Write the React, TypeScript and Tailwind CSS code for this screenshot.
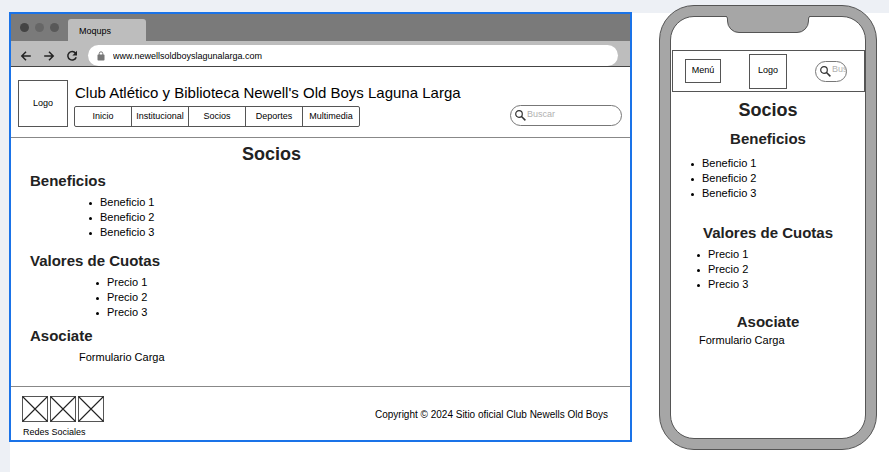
import type { ReactNode } from "react";

const sections = ["Inicio", "Institucional", "Socios", "Deportes", "Multimedia"];
const benefits = ["Beneficio 1", "Beneficio 2", "Beneficio 3"];
const prices = ["Precio 1", "Precio 2", "Precio 3"];

function BackIcon() {
  return (
    <svg className="size-3" viewBox="0 0 12 12" fill="none" stroke="#222" strokeWidth="1.5">
      <path d="M10.8 6H2M6 1.8 1.8 6 6 10.2" />
    </svg>
  );
}

function ForwardIcon() {
  return (
    <svg className="size-3" viewBox="0 0 12 12" fill="none" stroke="#222" strokeWidth="1.5">
      <path d="M1.2 6H10M6 1.8 10.2 6 6 10.2" />
    </svg>
  );
}

function ReloadIcon() {
  return (
    <svg className="size-3" viewBox="0 0 12 12" fill="none">
      <path d="M9.6 3.2A4.3 4.3 0 1 0 10.2 7.2" stroke="#222" strokeWidth="1.5" />
      <path d="M11 0.8V5.4H6.4Z" fill="#222" />
    </svg>
  );
}

function LockIcon() {
  return (
    <svg className="h-[10px] w-[8px] shrink-0" viewBox="0 0 8 10" fill="none">
      <rect x="0.5" y="3.6" width="7" height="6" rx="0.8" fill="#777" />
      <path d="M2.2 4V2.6a1.8 1.8 0 0 1 3.6 0V4" stroke="#777" strokeWidth="1" />
    </svg>
  );
}

function SearchIcon() {
  return (
    <svg className="size-[11px] shrink-0" viewBox="0 0 11 11" fill="none" stroke="#333">
      <circle cx="4" cy="4" r="3.3" strokeWidth="1.2" />
      <path d="M6.5 6.5 10.4 10.4" strokeWidth="1.5" />
    </svg>
  );
}

function SearchBox({ label, className }: { label: string; className: string }) {
  return (
    <label
      className={`flex h-[21px] items-center gap-px overflow-hidden rounded-full border border-[#777] bg-white pl-1 ${className}`}
    >
      <SearchIcon />
      <input
        type="text"
        aria-label={label}
        placeholder="Buscar"
        className="mb-1 h-4 w-20 shrink-0 bg-transparent text-[9px] outline-none placeholder:text-[#b0b0b0]"
      />
    </label>
  );
}

function Title({ children, className }: { children: ReactNode; className: string }) {
  return <h1 className={`text-[18px] leading-6 font-bold text-[#222] ${className}`}>{children}</h1>;
}

function Heading({ children, className }: { children: ReactNode; className: string }) {
  return <h2 className={`text-[15px] leading-5 font-bold text-[#222] ${className}`}>{children}</h2>;
}

function Bullets({ items, className }: { items: string[]; className: string }) {
  return (
    <ul className={`text-[11px] leading-[15px] ${className}`}>
      {items.map((item) => (
        <li
          key={item}
          className="flex items-center gap-2 before:mt-0.5 before:size-[3px] before:rounded-full before:bg-black before:content-['']"
        >
          {item}
        </li>
      ))}
    </ul>
  );
}

function CrossBox({ name }: { name: string }) {
  return (
    <a href="#" aria-label={name}>
      <svg className="size-[26px]" viewBox="0 0 26 26" fill="none" stroke="#222">
        <rect x="0.5" y="0.5" width="25" height="25" stroke="#555" />
        <path d="M0.5 0.5l25 25M25.5 0.5l-25 25" strokeWidth="1.1" />
      </svg>
    </a>
  );
}

function BrowserWindow() {
  return (
    <section className="-mt-px -ml-px min-w-0 flex-1 border-2 border-[#1a73e8] bg-white">
      <div className="flex h-[27px] items-end bg-[#7a7a7a] pl-[9px]">
        <div className="flex gap-[6px] self-center">
          <span className="size-[9px] rounded-full bg-[#444]" />
          <span className="size-[9px] rounded-full bg-[#666]" />
          <span className="size-[9px] rounded-full bg-[#595959]" />
        </div>
        <div className="ml-[9px] h-[22px] w-[78px] rounded-t-[3px] bg-[#bdbdbd] pl-[11px] text-[9px] leading-6">
          Moqups
        </div>
      </div>
      <div className="flex h-[26px] items-end border-b border-[#444] bg-[#bdbdbd] pr-3 pl-[9px]">
        <div className="flex h-[21px] items-center gap-[11px]">
          <button aria-label="Atrás"><BackIcon /></button>
          <button aria-label="Adelante"><ForwardIcon /></button>
          <button aria-label="Recargar"><ReloadIcon /></button>
        </div>
        <div className="ml-[10px] flex h-[21px] flex-1 items-center gap-2 rounded-full bg-white pl-[9px]">
          <LockIcon />
          <input
            aria-label="Dirección"
            defaultValue="www.newellsoldboyslagunalarga.com"
            className="h-4 w-full text-[9px] outline-none"
          />
        </div>
      </div>

      <header className="flex items-end border-b border-[#888] pt-[13px] pr-2 pb-[10px] pl-[7px]">
        <div className="flex h-[47px] w-[50px] items-center justify-center border border-[#555] text-[9px]">Logo</div>
        <div className="ml-[6px]">
          <p className="pl-px text-[15px] leading-[26px] whitespace-nowrap">
            Club Atlético y Biblioteca Newell's Old Boys Laguna Larga
          </p>
          <nav className="flex h-[21px] w-[286px] divide-x divide-[#555] rounded-[2px] border border-[#555] text-[9px]">
            {sections.map((name) => (
              <a key={name} href="#" className="flex flex-1 basis-0 items-center justify-center">
                {name}
              </a>
            ))}
          </nav>
        </div>
        <SearchBox label="Buscar en el sitio" className="mb-px ml-auto w-[112px]" />
      </header>

      <main className="px-[19px] pb-[21px]">
        <Title className="mt-1 ml-[212px]">Socios</Title>
        <Heading className="mt-[5px]">Beneficios</Heading>
        <Bullets items={benefits} className="mt-1 pl-[59px]" />
        <Heading className="mt-[11px]">Valores de Cuotas</Heading>
        <Bullets items={prices} className="mt-1 pl-[66px]" />
        <Heading className="mt-[6px]">Asociate</Heading>
        <p className="mt-1 pl-[49px] text-[11px] leading-[15px]">Formulario Carga</p>
      </main>

      <footer className="flex items-start justify-between border-t border-[#888] pt-[9px] pr-[22px] pl-[11px]">
        <div>
          <div className="flex gap-0.5">
            <CrossBox name="Facebook" />
            <CrossBox name="Instagram" />
            <CrossBox name="Twitter" />
          </div>
          <p className="mt-0.5 pl-px text-[9px] leading-4">Redes Sociales</p>
        </div>
        <p className="mt-[11px] text-[10px] leading-4">Copyright © 2024 Sitio oficial Club Newells Old Boys</p>
      </footer>
    </section>
  );
}

function Phone() {
  return (
    <section className="-mt-2 w-[218px] shrink-0 rounded-[35px] border border-[#555] bg-[#a6a6a6] p-[10px]">
      <div className="relative rounded-[24px] border border-[#555] bg-white pt-[33px] pb-[90px]">
        <svg className="absolute -top-px left-[55px] h-[18px] w-[84px]" viewBox="0 0 84 18" fill="none">
          <path
            d="M0 0.5Q1.5 0.5 1.5 3V5A11.5 11.5 0 0 0 13 16.5H71A11.5 11.5 0 0 0 82.5 5V3Q82.5 0.5 84 0.5"
            fill="#a6a6a6"
            stroke="#555"
          />
          <path d="M1 0H83V1H1Z" fill="#a6a6a6" />
        </svg>
        <header className="ml-px flex h-[42px] items-center justify-between border border-[#555] pr-[17px] pl-3">
          <button className="h-6 w-9 border border-[#555] text-[9px]">Menú</button>
          <div className="flex h-[35px] w-[38px] items-center justify-center border border-[#555] text-[9px]">
            Logo
          </div>
          <SearchBox label="Buscar" className="w-8" />
        </header>
        <main>
          <Title className="mt-[6px] text-center">Socios</Title>
          <Heading className="mt-[7px] text-center">Beneficios</Heading>
          <Bullets items={benefits} className="mt-[7px] pl-5" />
          <Heading className="mt-[22px] text-center">Valores de Cuotas</Heading>
          <Bullets items={prices} className="mt-1 pl-[26px]" />
          <Heading className="mt-5 text-center">Asociate</Heading>
          <p className="mt-px pl-7 text-[11px] leading-[15px]">Formulario Carga</p>
        </main>
      </div>
    </section>
  );
}

export default function App() {
  return (
    <div className="flex min-h-screen bg-[#edf0f5] pt-[13px] pl-[10px] font-['Liberation_Sans',Arial,sans-serif] text-black">
      <div className="flex flex-1 items-start gap-[27px] bg-white pr-3">
        <BrowserWindow />
        <Phone />
      </div>
    </div>
  );
}
